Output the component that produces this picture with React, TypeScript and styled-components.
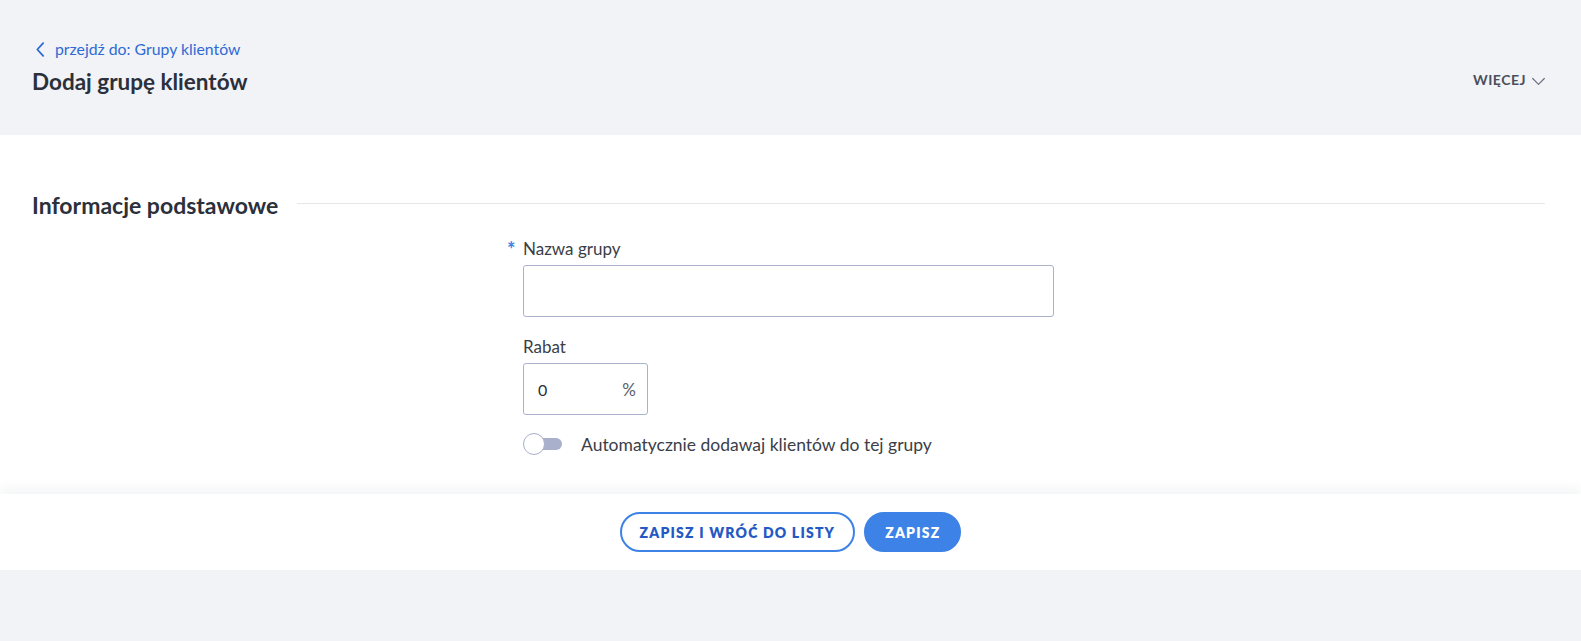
import React from "react";
import styled, { createGlobalStyle } from "styled-components";

const GlobalStyle = createGlobalStyle`
  body {
    margin: 0;
    background: #f2f3f7;
    font-family: "Lato", "Noto Sans", sans-serif;
    color: #2d323d;
  }
`;

const Page = styled.div`
  display: flex;
  flex-direction: column;
  min-height: 100vh;
`;

const Header = styled.header`
  display: flex;
  justify-content: space-between;
  align-items: flex-start;
  height: 135px;
  box-sizing: border-box;
  padding: 39px 36px 0 32px;
`;

const TitleBlock = styled.div`
  display: flex;
  flex-direction: column;
  gap: 9px;
`;

const BackLink = styled.a`
  display: flex;
  align-items: center;
  gap: 6px;
  color: #2f6ad4;
  font-size: 15.8px;
  line-height: 20px;
  text-decoration: none;
  cursor: pointer;
`;

const Title = styled.h1`
  margin: 0;
  font-size: 22.5px;
  line-height: 28px;
  font-weight: 700;
  color: #2b303b;
`;

const MoreButton = styled.button`
  margin-top: 31px;
  display: flex;
  align-items: center;
  gap: 6px;
  border: 0;
  background: none;
  padding: 0;
  font-family: inherit;
  font-size: 14px;
  line-height: 20px;
  font-weight: 700;
  letter-spacing: 0.5px;
  color: #4a4f5c;
  cursor: pointer;

  svg {
    margin-top: 2px;
  }
`;

const Card = styled.section`
  background: #fff;
  padding: 55px 36px 39px 32px;
`;

const SectionHeader = styled.div`
  display: flex;
  align-items: center;
  gap: 19px;
`;

const SectionTitle = styled.h2`
  margin: 0;
  font-size: 23px;
  line-height: 30px;
  font-weight: 700;
  color: #2b303b;
  white-space: nowrap;
`;

const Rule = styled.div`
  flex: 1;
  height: 1px;
  background: #e6e7eb;
  margin-top: -3px;
`;

const Form = styled.div`
  display: flex;
  flex-direction: column;
  padding-left: 491px;
  padding-top: 19px;
`;

const Field = styled.div<{ $gap?: number }>`
  display: flex;
  flex-direction: column;
  gap: 6px;
  margin-bottom: ${(p) => p.$gap ?? 0}px;
`;

const Label = styled.label<{ $required?: boolean }>`
  position: relative;
  font-size: 17px;
  line-height: 20px;
  color: #3a3e48;

  &::before {
    content: ${(p) => (p.$required ? '"*"' : '""')};
    position: absolute;
    left: -16px;
    top: 0;
    color: #3e7fe3;
    font-size: 20px;
    font-weight: 700;
  }
`;

const TextInput = styled.input<{ $width: number }>`
  box-sizing: border-box;
  width: ${(p) => p.$width}px;
  height: 52px;
  border: 1px solid #a9b2cb;
  border-radius: 3px;
  padding: 0 14px;
  font-family: inherit;
  font-size: 15px;
  color: #2b303b;
  outline: none;
`;

const AffixBox = styled.div`
  box-sizing: border-box;
  display: flex;
  align-items: center;
  width: 125px;
  height: 52px;
  border: 1px solid #a9b2cb;
  border-radius: 3px;
  padding: 0 11px 0 14px;
`;

const AffixInput = styled.input`
  flex: 1;
  min-width: 0;
  border: 0;
  outline: none;
  padding: 0;
  font-family: inherit;
  font-size: 16px;
  color: #2b303b;
`;

const Suffix = styled.span`
  font-size: 17px;
  color: #5a5f6b;
`;

const ToggleRow = styled.label`
  display: flex;
  align-items: center;
  gap: 19px;
  font-size: 17.5px;
  color: #3a3e48;
  cursor: pointer;
`;

const Switch = styled.span`
  position: relative;
  display: inline-block;
  width: 39px;
  height: 22px;

  &::before {
    content: "";
    position: absolute;
    left: 6px;
    right: 0;
    top: 5px;
    height: 12px;
    border-radius: 6px;
    background: #a8b0cb;
  }

  &::after {
    content: "";
    position: absolute;
    left: 0;
    top: 0;
    width: 20px;
    height: 20px;
    border-radius: 50%;
    background: #fff;
    border: 1px solid #a8b0cb;
  }
`;

const Footer = styled.footer`
  position: relative;
  display: flex;
  justify-content: center;
  gap: 9px;
  background: #fff;
  padding: 18px 0 18px;
  box-shadow: 0 -6px 10px rgba(40, 50, 70, 0.05);
`;

const Button = styled.button<{ $primary?: boolean }>`
  box-sizing: border-box;
  height: 40px;
  padding: 0 ${(p) => (p.$primary ? 19 : 18)}px;
  border-radius: 20px;
  border: 2px solid #3d82e6;
  background: ${(p) => (p.$primary ? "#3d82e6" : "#fff")};
  color: ${(p) => (p.$primary ? "#fff" : "#2459c4")};
  font-family: inherit;
  font-size: 14px;
  font-weight: 800;
  letter-spacing: 1.2px;
  cursor: pointer;
`;

const BackChevron = () => (
  <svg width={17} height={17} viewBox="0 0 16 16" fill="none">
    <path d="M10.5 2 5 8l5.5 6" stroke="#2f6ad4" strokeWidth={1.7} strokeLinecap="round" strokeLinejoin="round" />
  </svg>
);

const DownChevron = () => (
  <svg width={13} height={13} viewBox="0 0 13 13" fill="none">
    <path d="M0.7 3.5 6.5 9.3l5.8-5.8" stroke="#6a7080" strokeWidth={1.2} strokeLinecap="round" strokeLinejoin="round" />
  </svg>
);

const App = () => {
  return (
    <Page>
      <GlobalStyle />
      <Header>
        <TitleBlock>
          <BackLink>
            <BackChevron />
            przejdź do: Grupy klientów
          </BackLink>
          <Title>Dodaj grupę klientów</Title>
        </TitleBlock>
        <MoreButton>
          WIĘCEJ
          <DownChevron />
        </MoreButton>
      </Header>

      <Card>
        <SectionHeader>
          <SectionTitle>Informacje podstawowe</SectionTitle>
          <Rule />
        </SectionHeader>
        <Form>
          <Field $gap={20}>
            <Label $required>Nazwa grupy</Label>
            <TextInput $width={531} />
          </Field>
          <Field $gap={18}>
            <Label>Rabat</Label>
            <AffixBox>
              <AffixInput defaultValue="0" />
              <Suffix>%</Suffix>
            </AffixBox>
          </Field>
          <ToggleRow>
            <Switch />
            Automatycznie dodawaj klientów do tej grupy
          </ToggleRow>
        </Form>
      </Card>

      <Footer>
        <Button>ZAPISZ I WRÓĆ DO LISTY</Button>
        <Button $primary>ZAPISZ</Button>
      </Footer>
    </Page>
  );
};

export default App;
